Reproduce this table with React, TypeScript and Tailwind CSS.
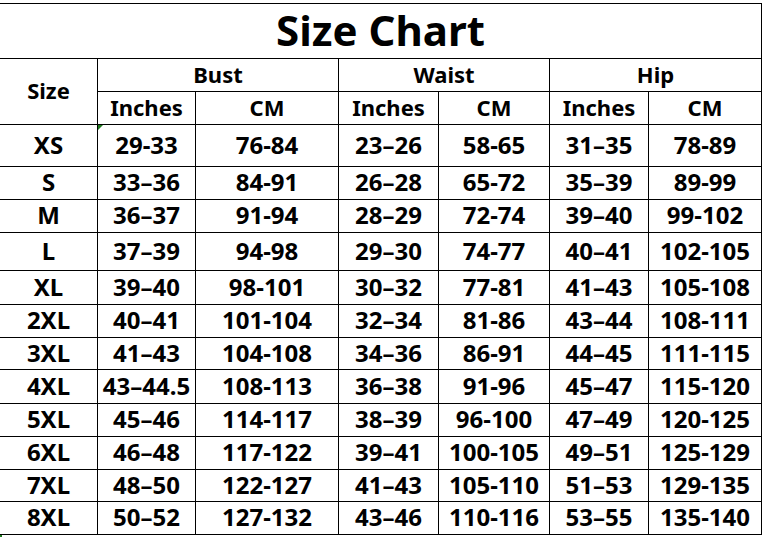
const rows: [string, string, string, string, string, string, string][] = [
  ["XS", "29-33", "76-84", "23–26", "58-65", "31–35", "78-89"],
  ["S", "33–36", "84-91", "26–28", "65-72", "35–39", "89-99"],
  ["M", "36–37", "91-94", "28–29", "72-74", "39–40", "99-102"],
  ["L", "37–39", "94-98", "29–30", "74-77", "40–41", "102-105"],
  ["XL", "39–40", "98-101", "30–32", "77-81", "41–43", "105-108"],
  ["2XL", "40–41", "101-104", "32–34", "81-86", "43–44", "108-111"],
  ["3XL", "41–43", "104-108", "34–36", "86-91", "44–45", "111-115"],
  ["4XL", "43–44.5", "108-113", "36–38", "91-96", "45–47", "115-120"],
  ["5XL", "45–46", "114-117", "38–39", "96-100", "47–49", "120-125"],
  ["6XL", "46–48", "117-122", "39–41", "100-105", "49–51", "125-129"],
  ["7XL", "48–50", "122-127", "41–43", "105-110", "51–53", "129-135"],
  ["8XL", "50–52", "127-132", "43–46", "110-116", "53–55", "135-140"],
];

const cell = "bg-white flex items-center justify-center pb-[2px]";

export default function App() {
  return (
    <div
      className="relative w-[764px] h-[537px] bg-white pt-[3px] text-black font-bold"
      style={{ fontFamily: '"Noto Sans", "Open Sans", sans-serif' }}
    >
      <div className="grid w-fit grid-cols-[97px_97px_142px_99px_110px_98px_112px] grid-rows-[54px_32px_32px_41px_32px_32px_37px_33px_32px_31px_33px_32px_32px_31px_32px] gap-px bg-black border-t border-b border-r border-black">
        <div className={`${cell} col-span-7 text-[42px] leading-none`}>
          Size Chart
        </div>
        <div className={`${cell} row-span-2 text-[22px]`}>Size</div>
        <div className={`${cell} col-span-2 text-[22px]`}>Bust</div>
        <div className={`${cell} col-span-2 text-[22px]`}>Waist</div>
        <div className={`${cell} col-span-2 text-[22px]`}>Hip</div>
        {["Inches", "CM", "Inches", "CM", "Inches", "CM"].map((h, i) => (
          <div key={i} className={`${cell} text-[22px]`}>
            {h}
          </div>
        ))}
        {rows.map((r, ri) =>
          r.map((v, ci) => (
            <div key={`${ri}-${ci}`} className={`${cell} relative text-[24px]`}>
              {ri === 0 && ci === 1 && (
                <span className="absolute left-0 top-0 border-t-[5px] border-r-[5px] border-t-[#1f7a1f] border-r-transparent" />
              )}
              {v}
            </div>
          ))
        )}
      </div>
      <span className="absolute left-0 top-[535px] w-[2px] h-[2px] bg-[#1f7a1f]" />
    </div>
  );
}
